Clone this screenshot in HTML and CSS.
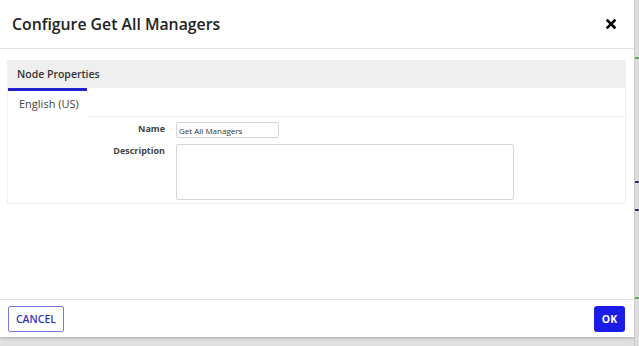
FILE: index.html
```html
<!DOCTYPE html>
<html lang="en">
<head>
    <meta charset="UTF-8">
    <title>Configure Get All Managers</title>
    <link rel="stylesheet" href="styles.css">
</head>
<body>
    <div class="page">
        <div class="modal">
            <div class="modal-header">
                <h2>Configure Get All Managers</h2>
                <svg class="close" width="10" height="10" viewBox="0 0 10 10">
                    <path d="M1.5 1.5 L8.5 8.5 M8.5 1.5 L1.5 8.5" stroke="#000" stroke-width="2.6" stroke-linecap="square"/>
                </svg>
            </div>
            <div class="modal-body">
                <div class="panel">
                    <div class="panel-title">Node Properties</div>
                    <div class="tabs">
                        <div class="tab active">English (US)</div>
                        <div class="tab-rest"></div>
                    </div>
                    <div class="form">
                        <label>Name</label>
                        <input type="text" class="name-input" value="Get All Managers">
                        <label>Description</label>
                        <textarea class="desc-input"></textarea>
                    </div>
                </div>
            </div>
            <div class="modal-footer">
                <button class="btn cancel">CANCEL</button>
                <button class="btn ok">OK</button>
            </div>
        </div>
        <div class="side">
            <span class="mark green" style="top: 57px"></span>
            <span class="mark navy" style="top: 181px"></span>
            <span class="mark navy" style="top: 209px"></span>
            <span class="mark green" style="top: 297px"></span>
        </div>
    </div>
</body>
</html>
```

FILE: styles.css
```css
body {
    margin: 0;
    background: #e0e0e0;
    font-family: 'Open Sans', sans-serif;
    color: #333;
}
.page {
    display: flex;
    height: 346px;
    overflow: hidden;
}
.modal {
    width: 634px;
    height: 337px;
    background: #fff;
    display: flex;
    flex-direction: column;
    box-shadow: 0 1px 3px rgba(0, 0, 0, 0.25);
    flex-shrink: 0;
}
.modal-header {
    height: 48px;
    border-bottom: 1px solid #e3e3e3;
    display: flex;
    align-items: center;
    justify-content: space-between;
    padding: 0 18px 0 12px;
}
.modal-header h2 {
    margin: 0;
    font-size: 15.8px;
    font-weight: 600;
    color: #222;
}
.close {
    display: block;
}
.modal-body {
    flex: 1;
    padding: 11px 8px 0 7px;
}
.panel {
    border: 1px solid #f0f0f0;
    border-top: none;
}
.panel-title {
    background: #efefef;
    height: 28px;
    line-height: 28px;
    padding-left: 9px;
    font-size: 10.5px;
    font-weight: 600;
    color: #333;
}
.tabs {
    display: flex;
    height: 29px;
}
.tab {
    width: 79px;
    border-top: 3px solid #2020d0;
    box-sizing: border-box;
    font-size: 11px;
    color: #444;
    padding: 5px 0 0 11px;
}
.tab-rest {
    flex: 1;
    border-bottom: 1px solid #efefef;
}
.form {
    display: grid;
    grid-template-columns: 157px auto;
    column-gap: 11px;
    row-gap: 6px;
    padding: 5px 0 3px;
    justify-items: start;
}
.form label {
    justify-self: end;
    font-size: 9px;
    font-weight: 700;
    color: #444;
    line-height: 14px;
}
.name-input {
    width: 103px;
    height: 16px;
    box-sizing: border-box;
    border: 1px solid #d6d6d6;
    border-radius: 2px;
    font-family: 'Open Sans', sans-serif;
    font-size: 8px;
    color: #333;
    padding: 0 2px;
}
.desc-input {
    width: 338px;
    height: 56px;
    box-sizing: border-box;
    border: 1px solid #d6d6d6;
    border-radius: 2px;
    resize: none;
}
.modal-footer {
    height: 37px;
    border-top: 1px solid #e3e3e3;
    display: flex;
    align-items: center;
    justify-content: space-between;
    padding: 0 9px 0 8px;
}
.btn {
    height: 26px;
    font-family: 'Open Sans', sans-serif;
    font-size: 10.5px;
    font-weight: 600;
    border-radius: 2px;
    cursor: pointer;
}
.cancel {
    width: 56px;
    background: #fff;
    border: 1px solid #7a7ad8;
    color: #3535b8;
}
.ok {
    width: 31px;
    background: #1c1ce8;
    border: none;
    color: #fff;
    font-weight: 700;
    border-radius: 3px;
}
.side {
    flex: 1;
    position: relative;
    background: #dcdcdc;
    border-left: 1px solid #ccc;
}
.mark {
    position: absolute;
    left: 0;
    width: 4px;
    height: 2px;
}
.green {
    background: #5aa86a;
}
.navy {
    background: #33336a;
}
```
